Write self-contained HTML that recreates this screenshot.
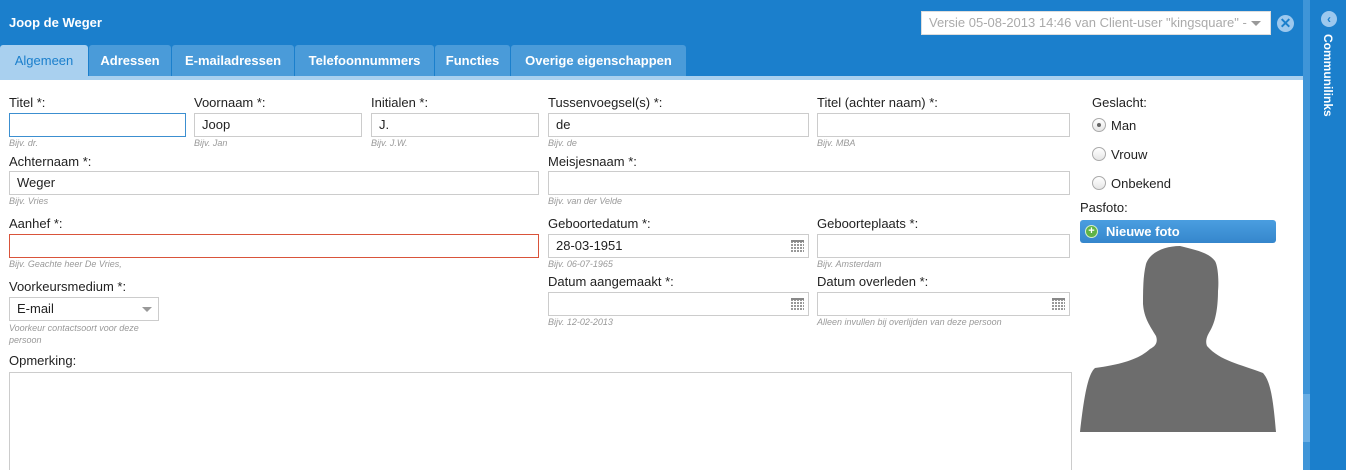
<!DOCTYPE html>
<html style="width:1346px;height:470px;overflow:hidden"><head><meta charset="utf-8"><style>
*{box-sizing:border-box;margin:0;padding:0}
body{width:1346px;height:470px;overflow:hidden;background:#fff;font-family:"Liberation Sans",Arial,sans-serif;position:relative;font-size:13px;color:#222}
.a{position:absolute}
.hdr{left:0;top:0;width:1303px;height:80px;background:#1b7fcc}
.stripe{left:0;top:76px;width:1303px;height:4px;background:#a9d0ef}
.tab{position:absolute;top:45px;height:31px;background:#4a9bd9;color:#fff;font-weight:bold;font-size:13px;line-height:31px;text-align:center;border-radius:3px 3px 0 0}
.tab.on{background:#a9d0ef;color:#1b7fcc;font-weight:normal}
.lbl{position:absolute;font-size:13px;color:#222}
.in{position:absolute;height:24px;border:1px solid #ccc;background:#fff;font-size:13px;line-height:22px;padding-left:7px}
.hint{position:absolute;font-size:9px;font-style:italic;color:#999}
.cal{position:absolute;right:4px;top:5px;width:13px;height:12px;background:repeating-linear-gradient(90deg,#999 0 2px,#fff 2px 3px),#999}
.cal:before{content:"";position:absolute;left:0;right:0;top:0;height:2px;background:#888}
.cal:after{content:"";position:absolute;left:0;right:0;top:2px;bottom:0;background:repeating-linear-gradient(0deg,transparent 0 2px,#fff 2px 3px)}
.radio{position:absolute;width:14px;height:14px;border:1px solid #aaa;border-radius:50%;background:linear-gradient(#fff,#e6e6e6)}
</style></head><body>
<div class="a hdr"></div>
<div class="a" style="left:9px;top:15px;color:#fff;font-weight:bold;font-size:13px">Joop de Weger</div>
<div class="a" style="left:921px;top:11px;width:350px;height:24px;background:#fff;border:1px solid #ddd;color:#aaa;font-size:13px;line-height:22px;padding-left:7px;white-space:nowrap;overflow:hidden">Versie 05-08-2013 14:46 van Client-user "kingsquare" -</div>
<div class="a" style="left:1251px;top:21px;width:0;height:0;border-left:5px solid transparent;border-right:5px solid transparent;border-top:5px solid #999"></div>
<div class="a" style="left:1277px;top:15px;width:17px;height:17px;border-radius:50%;background:#9cc8ee;color:#1b7fcc;font-weight:bold;font-size:14px;line-height:17px;text-align:center">✕</div>
<div class="tab on" style="left:0;width:88px">Algemeen</div>
<div class="tab" style="left:89px;width:82px">Adressen</div>
<div class="tab" style="left:172px;width:122px">E-mailadressen</div>
<div class="tab" style="left:295px;width:139px">Telefoonnummers</div>
<div class="tab" style="left:435px;width:75px">Functies</div>
<div class="tab" style="left:511px;width:175px">Overige eigenschappen</div>
<div class="a stripe"></div>
<div class="a" style="left:1303px;top:0;width:7px;height:470px;background:#3f95d8"></div>
<div class="a" style="left:1303px;top:394px;width:7px;height:48px;background:#6aaee4"></div>
<div class="a" style="left:1310px;top:0;width:36px;height:470px;background:#1b7fcc"></div>
<div class="a" style="left:1321px;top:11px;width:16px;height:16px;border-radius:50%;background:#9cc8ee;color:#1b7fcc;font-weight:bold;font-size:12px;line-height:16px;text-align:center">‹</div>
<div class="a" style="left:1321px;top:34px;color:#fff;font-weight:bold;font-size:12px;writing-mode:vertical-rl">Communilinks</div>

<div class="lbl" style="left:9px;top:95px">Titel *:</div>
<div class="in" style="left:9px;top:113px;width:177px;border-color:#3c8fd0"></div>
<div class="hint" style="left:9px;top:138px">Bijv. dr.</div>
<div class="lbl" style="left:194px;top:95px">Voornaam *:</div>
<div class="in" style="left:194px;top:113px;width:168px">Joop</div>
<div class="hint" style="left:194px;top:138px">Bijv. Jan</div>
<div class="lbl" style="left:371px;top:95px">Initialen *:</div>
<div class="in" style="left:371px;top:113px;width:168px">J.</div>
<div class="hint" style="left:371px;top:138px">Bijv. J.W.</div>
<div class="lbl" style="left:548px;top:95px">Tussenvoegsel(s) *:</div>
<div class="in" style="left:548px;top:113px;width:261px">de</div>
<div class="hint" style="left:548px;top:138px">Bijv. de</div>
<div class="lbl" style="left:817px;top:95px">Titel (achter naam) *:</div>
<div class="in" style="left:817px;top:113px;width:253px"></div>
<div class="hint" style="left:817px;top:138px">Bijv. MBA</div>

<div class="lbl" style="left:9px;top:154px">Achternaam *:</div>
<div class="in" style="left:9px;top:171px;width:530px">Weger</div>
<div class="hint" style="left:9px;top:196px">Bijv. Vries</div>
<div class="lbl" style="left:548px;top:154px">Meisjesnaam *:</div>
<div class="in" style="left:548px;top:171px;width:522px"></div>
<div class="hint" style="left:548px;top:196px">Bijv. van der Velde</div>

<div class="lbl" style="left:9px;top:216px">Aanhef *:</div>
<div class="in" style="left:9px;top:234px;width:530px;border-color:#d9533a"></div>
<div class="hint" style="left:9px;top:259px">Bijv. Geachte heer De Vries,</div>
<div class="lbl" style="left:548px;top:216px">Geboortedatum *:</div>
<div class="in" style="left:548px;top:234px;width:261px">28-03-1951<span class="cal"></span></div>
<div class="hint" style="left:548px;top:259px">Bijv. 06-07-1965</div>
<div class="lbl" style="left:817px;top:216px">Geboorteplaats *:</div>
<div class="in" style="left:817px;top:234px;width:253px"></div>
<div class="hint" style="left:817px;top:259px">Bijv. Amsterdam</div>

<div class="lbl" style="left:9px;top:279px">Voorkeursmedium *:</div>
<div class="in" style="left:9px;top:297px;width:150px">E-mail</div>
<div class="a" style="left:142px;top:307px;border-left:5px solid transparent;border-right:5px solid transparent;border-top:5px solid #999"></div>
<div class="hint" style="left:9px;top:322px;line-height:12px">Voorkeur contactsoort voor deze<br>persoon</div>
<div class="lbl" style="left:548px;top:274px">Datum aangemaakt *:</div>
<div class="in" style="left:548px;top:292px;width:261px"><span class="cal"></span></div>
<div class="hint" style="left:548px;top:317px">Bijv. 12-02-2013</div>
<div class="lbl" style="left:817px;top:274px">Datum overleden *:</div>
<div class="in" style="left:817px;top:292px;width:253px"><span class="cal"></span></div>
<div class="hint" style="left:817px;top:317px">Alleen invullen bij overlijden van deze persoon</div>

<div class="lbl" style="left:9px;top:353px">Opmerking:</div>
<div class="in" style="left:9px;top:372px;width:1063px;height:98px;border-bottom:none"></div>

<div class="lbl" style="left:1092px;top:95px">Geslacht:</div>
<div class="radio" style="left:1092px;top:118px"></div>
<div class="a" style="left:1097px;top:123px;width:4px;height:4px;border-radius:50%;background:#666"></div>
<div class="lbl" style="left:1111px;top:118px">Man</div>
<div class="radio" style="left:1092px;top:147px"></div>
<div class="lbl" style="left:1111px;top:147px">Vrouw</div>
<div class="radio" style="left:1092px;top:176px"></div>
<div class="lbl" style="left:1111px;top:176px">Onbekend</div>
<div class="lbl" style="left:1080px;top:200px">Pasfoto:</div>
<div class="a" style="left:1080px;top:220px;width:196px;height:23px;border-radius:3px;background:linear-gradient(#4a9ee0,#3586cc);color:#fff;font-weight:bold;font-size:13px;line-height:23px;padding-left:26px">Nieuwe foto</div>
<div class="a" style="left:1085px;top:225px;width:13px;height:13px;border-radius:50%;background:#5fb346;border:1px solid #d6f0cc;color:#fff;font-size:11px;line-height:11px;text-align:center;font-weight:bold">+</div>
<svg class="a" style="left:1080px;top:246px" width="196" height="186" viewBox="0 0 196 186">
<path fill="#6d6d6d" d="M100 0 C85 0 70 6 66 18 C63 30 63 45 63 58 C64 72 70 80 76 90 C78 96 76 100 70 103 C60 112 45 118 15 122 C8 128 4 150 0 186 L196 186 C193 150 190 135 183 127 C160 118 140 115 127 100 C125 95 127 90 130 85 C136 75 138 60 138 45 C139 35 138 20 135 15 C128 6 115 4 100 0 Z"/>
</svg>
</body></html>
